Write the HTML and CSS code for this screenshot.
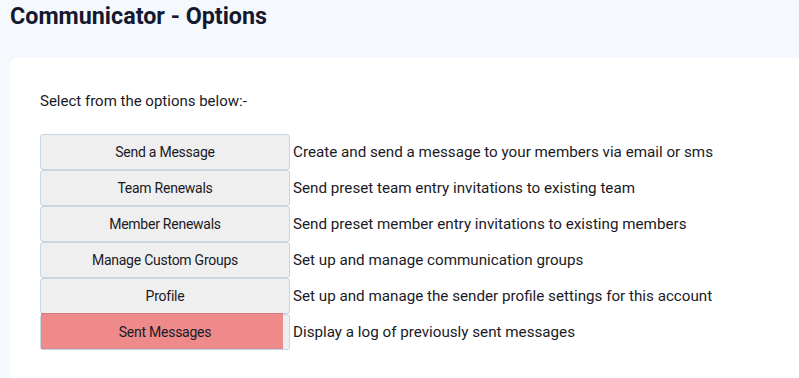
FILE: index.html
```html
<!DOCTYPE html>
<html>
<head>
<meta charset="utf-8">
<link rel="stylesheet" href="styles.css">
</head>
<body>
<h1 class="title">Communicator - Options</h1>
<div class="card">
  <p class="intro">Select from the options below:-</p>
  <div class="options">
    <button class="opt">Send a Message</button>
    <span class="desc">Create and send a message to your members via email or sms</span>
    <button class="opt">Team Renewals</button>
    <span class="desc">Send preset team entry invitations to existing team</span>
    <button class="opt">Member Renewals</button>
    <span class="desc">Send preset member entry invitations to existing members</span>
    <button class="opt">Manage Custom Groups</button>
    <span class="desc">Set up and manage communication groups</span>
    <button class="opt">Profile</button>
    <span class="desc">Set up and manage the sender profile settings for this account</span>
    <button class="opt opt-active"><span class="opt-label">Sent Messages</span></button>
    <span class="desc">Display a log of previously sent messages</span>
  </div>
</div>
</body>
</html>
```
FILE: styles.css
```css
html, body {
  margin: 0;
  padding: 0;
}
body {
  background: #f5f8fc;
  font-family: Roboto, "Noto Sans", sans-serif;
  color: #1a1a26;
  padding-left: 10px;
  overflow: hidden;
}
.title {
  margin: 0;
  padding-top: 2px;
  height: 56px;
  font-size: 23.3px;
  font-weight: 700;
  color: #14192f;
  line-height: 28px;
}
.card {
  box-sizing: border-box;
  height: 320px;
  background: #ffffff;
  border-top-left-radius: 6px;
  padding: 30px 30px 0;
}
.intro {
  margin: 0;
  height: 46px;
  line-height: 26px;
  font-size: 15px;
}
.options {
  display: grid;
  grid-template-columns: 250px auto;
  grid-auto-rows: 36px;
  column-gap: 3px;
  align-items: center;
}
.opt {
  height: 36px;
  width: 250px;
  margin: 0;
  padding: 0;
  border: 1px solid #c8d5e6;
  border-radius: 3px;
  background: #efefef;
  font-family: Roboto, "Noto Sans", sans-serif;
  font-size: 14px;
  letter-spacing: -0.25px;
  color: #1a1a26;
  position: relative;
}
.opt-active::before {
  content: "";
  position: absolute;
  left: 0;
  top: -2px;
  right: 6px;
  bottom: 0;
  background: #ef8a8a;
  border-top: 1px solid #d7787b;
  border-bottom: 1px solid #d7878a;
}
.opt-label {
  position: relative;
}
.desc {
  font-size: 15.2px;
  white-space: nowrap;
}
```
